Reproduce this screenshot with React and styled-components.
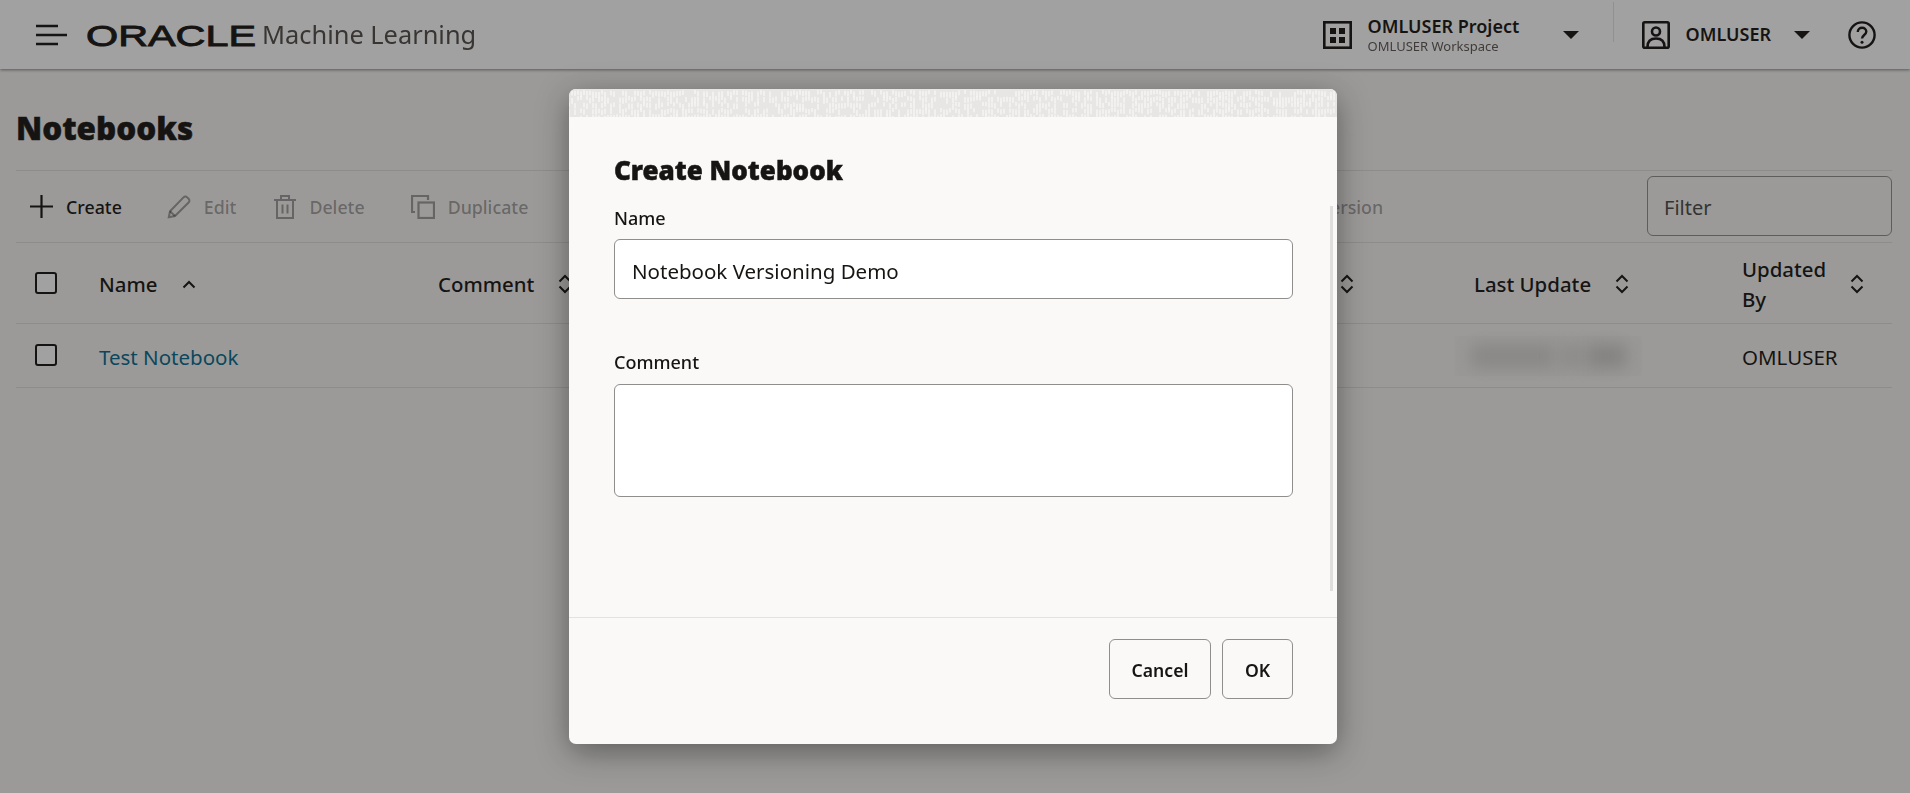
import React from "react";
import styled, { createGlobalStyle } from "styled-components";

const ink = "#161513";

const GlobalStyle = createGlobalStyle`
  html, body {
    margin: 0;
    padding: 0;
    height: 100%;
    overflow: hidden;
    background: #f5f4f2;
    color: ${ink};
    font-family: "Noto Sans", "Open Sans", sans-serif;
  }
  * { box-sizing: border-box; }
`;

const Page = styled.div`
  width: 1910px;
  height: 793px;
  overflow: hidden;
`;

const TopBar = styled.header`
  height: 69px;
  display: flex;
  align-items: center;
  padding: 0 34px 0 36px;
  background: #fff;
  box-shadow: 0 1px 3px rgba(0, 0, 0, 0.45);
`;

const BrandName = styled.span`
  margin-left: 6px;
  font-size: 25.4px;
  color: #312d2a;
  opacity: 0.85;
  line-height: 1;
`;

const LogoSvg = styled.svg`
  margin-left: 19px;
  display: block;
`;

const TopRight = styled.div`
  margin-left: auto;
  display: flex;
  align-items: center;
`;

const ProjectText = styled.div`
  margin-left: 16px;
  width: 195px;
  display: flex;
  flex-direction: column;
`;

const ProjectName = styled.span`
  margin-top: -2px;
  font-size: 18px;
  font-weight: 600;
  line-height: 24px;
`;

const ProjectSub = styled.span`
  font-size: 13px;
  line-height: 16px;
  color: #312d2a;
  opacity: 0.8;
`;

const Divider = styled.div`
  width: 1px;
  height: 40px;
  margin: -26px 28px 0 34px;
  background: rgba(22, 21, 19, 0.12);
`;

const UserName = styled.span`
  margin: -2px 23px 0 16px;
  font-size: 18px;
  font-weight: 600;
`;

const Caret = styled.span`
  width: 0;
  height: 0;
  border-left: 8px solid transparent;
  border-right: 8px solid transparent;
  border-top: 8px solid ${ink};
`;

const HelpWrap = styled.span`
  margin-left: 38px;
  display: flex;
`;

const Content = styled.main`
  padding: 0 18px 0 16px;
`;

const Title = styled.h1`
  margin: 0;
  height: 101px;
  padding-top: 16px;
  display: flex;
  align-items: center;
  font-size: 31.4px;
  font-weight: 900;
  -webkit-text-stroke: 0.5px ${ink};
`;

const Toolbar = styled.div`
  height: 73px;
  display: flex;
  align-items: center;
  padding-left: 14px;
  border-top: 1px solid #dedddb;
  border-bottom: 1px solid #dedddb;
`;

const ToolButton = styled.span`
  display: flex;
  align-items: center;
  gap: 13px;
  margin-left: ${(p) => p.$offset || 0}px;
  font-size: 17.8px;
  font-weight: 500;
  white-space: nowrap;
  color: ${(p) => (p.$disabled ? "rgba(22, 21, 19, 0.4)" : ink)};
`;

const FilterBox = styled.div`
  margin: -1px 0 0 auto;
  width: 245px;
  height: 60px;
  padding: 2px 0 0 16px;
  display: flex;
  align-items: center;
  font-size: 20px;
  color: #4a4846;
  border: 1px solid #8f8e8c;
  border-radius: 6px;
`;

const TableRow = styled.div`
  display: grid;
  grid-template-columns: 83px 339px 760px 276px 268px 1fr;
  align-items: center;
  height: ${(p) => p.$height}px;
  border-bottom: 1px solid #dedddb;
`;

const HeadCell = styled.div`
  display: flex;
  align-items: center;
  gap: 24px;
  justify-content: ${(p) => (p.$end ? "flex-end" : "flex-start")};
  padding-top: 2px;
  padding-right: ${(p) => (p.$end ? 120 : 0)}px;
  font-size: 20.4px;
  font-weight: 500;
  line-height: 30px;
`;

const BodyCell = styled.div`
  padding-top: 2px;
  font-size: 20.5px;
  color: ${(p) => p.$color || ink};
`;

const CheckCell = styled.div`
  padding-left: 19px;
  display: flex;
  margin-top: ${(p) => p.$shift}px;
`;

const CheckBox = styled.span`
  width: 22px;
  height: 22px;
  border: 2px solid ${ink};
  border-radius: 3px;
  background: #fff;
`;

const Redacted = styled.div`
  width: 187px;
  height: 40px;
  margin-left: -19px;
  background: #f1f0ee;
  display: flex;
  align-items: center;
  padding: 0 16px;
  gap: 2px;
`;

const RedactedBlob = styled.span`
  display: block;
  flex: ${(p) => p.$flex};
  height: 24px;
  background: ${(p) => p.$color};
  filter: blur(8px);
`;

const Scrim = styled.div`
  position: fixed;
  inset: 0;
  background: rgba(22, 21, 19, 0.4);
  padding: 89px 0 0 569px;
`;

const Dialog = styled.section`
  width: 768px;
  height: 655px;
  display: flex;
  flex-direction: column;
  overflow: hidden;
  background: #fbf9f8;
  border-radius: 7px;
  box-shadow: 0 8px 32px rgba(0, 0, 0, 0.4);
`;

const Band = styled.div`
  height: 28px;
  flex: none;
  background: #e8e6e4;
`;

const DialogBody = styled.div`
  flex: 1;
  position: relative;
  padding: 35px 44px 0 45px;
`;

const DialogTitle = styled.h2`
  margin: 0 0 18px;
  font-size: 26px;
  font-weight: 900;
  line-height: 36px;
  -webkit-text-stroke: 0.5px ${ink};
`;

const Label = styled.label`
  display: block;
  margin-bottom: ${(p) => p.$gap}px;
  font-size: 18px;
  font-weight: 500;
  line-height: 24px;
`;

const TextInput = styled.div`
  height: ${(p) => p.$height}px;
  margin-bottom: ${(p) => p.$gap || 0}px;
  padding: 3px 17px 0;
  display: flex;
  align-items: center;
  font-size: 20.5px;
  background: #fff;
  border: 1px solid #8f8e8c;
  border-radius: 6px;
`;

const ScrollThumb = styled.div`
  position: absolute;
  top: 89px;
  bottom: 26px;
  right: 4px;
  width: 3px;
  background: #dfdedc;
`;

const DialogFooter = styled.footer`
  height: 127px;
  flex: none;
  display: flex;
  justify-content: flex-end;
  align-items: flex-start;
  gap: 11px;
  padding: 21px 44px 0 0;
  border-top: 1px solid #e4e2e0;
`;

const FooterButton = styled.button`
  width: ${(p) => p.$width}px;
  height: 60px;
  padding: 2px 0 0;
  font-family: inherit;
  font-size: 17.6px;
  font-weight: 600;
  color: ${ink};
  background: transparent;
  border: 1px solid #8f8e8c;
  border-radius: 6px;
`;

const Stroke = ({ size, h, children, width = 2, color = "currentColor" }) => (
  <svg
    width={size}
    height={h || size}
    viewBox={`0 0 ${size} ${h || size}`}
    fill="none"
    stroke={color}
    strokeWidth={width}
  >
    {children}
  </svg>
);

const Hamburger = () => (
  <Stroke size={31} h={22} width={2.6} color={ink}>
    <path d="M0 2h22M0 11h31M0 20h22" />
  </Stroke>
);

const OracleLogo = () => (
  <LogoSvg width="170" height="40" viewBox="0 0 170 40">
    <text
      x="0"
      y="30.5"
      fontFamily="Liberation Sans"
      fontSize="29.5"
      textLength="170"
      lengthAdjust="spacingAndGlyphs"
      fill={ink}
      stroke={ink}
      strokeWidth="0.9"
    >
      ORACLE
    </text>
  </LogoSvg>
);

const GridIcon = () => (
  <Stroke size={29} h={28} width={2.6} color={ink}>
    <rect x="1.3" y="1.3" width="26.4" height="25.4" />
    <path
      d="M7 7h6v6H7zM16 7h6v6h-6zM7 16h6v6H7zM16 16h6v6h-6z"
      fill={ink}
      stroke="none"
    />
  </Stroke>
);

const PersonIcon = () => (
  <Stroke size={28} width={2.6} color={ink}>
    <rect x="1.3" y="1.3" width="25.4" height="25.4" rx="1.5" />
    <circle cx="14" cy="10.5" r="4" />
    <path d="M5.5 26c0-6 3.5-8.5 8.5-8.5s8.5 2.5 8.5 8.5" />
  </Stroke>
);

const HelpIcon = () => (
  <Stroke size={28} width={2.4} color={ink}>
    <circle cx="14" cy="14" r="12.6" />
    <path d="M9.8 11c0-2.8 2-4.2 4.3-4.2s4.2 1.5 4.2 3.8c0 3.4-4.3 3.4-4.3 7" />
    <circle cx="14" cy="21.2" r="1.5" fill={ink} stroke="none" />
  </Stroke>
);

const PlusIcon = () => (
  <Stroke size={23} width={2.2} color={ink}>
    <path d="M11.5 0v23M0 11.5h23" />
  </Stroke>
);

const PencilIcon = () => (
  <Stroke size={24} width={2}>
    <path d="M1.8 22.2l1.2-6L16.5 2.4c1.1-1.1 2.6-1.1 3.7 0l1.4 1.4c1.1 1.1 1.1 2.6 0 3.7L8 21z" />
    <path d="M3 16.2L8 21" />
  </Stroke>
);

const TrashIcon = () => (
  <Stroke size={22} h={24} width={2}>
    <path d="M0 5h22M3 5v18h16V5M7 5V1h8v4M8.5 9.5v9M13.5 9.5v9" />
  </Stroke>
);

const CopyIcon = () => (
  <Stroke size={24} width={2.2}>
    <path d="M4 17H1V1h16v4" />
    <rect x="7.5" y="7.5" width="15.5" height="15.5" />
  </Stroke>
);

const SortIcon = () => (
  <Stroke size={14} h={20} width={2} color={ink}>
    <path d="M1.5 7.5L7 2l5.5 5.5M1.5 12.5L7 18l5.5-5.5" />
  </Stroke>
);

const SortUpIcon = () => (
  <Stroke size={14} h={9} width={2} color={ink}>
    <path d="M1.5 7.5L7 2l5.5 5.5" />
  </Stroke>
);

// speckled strip along the top of the dialog
const speckles = [];
for (let x = 0; x < 768; x += 3) {
  for (let y = 0; y < 28; y += 6) {
    const n = Math.abs(Math.sin(x * 12.9898 + y * 78.233) * 43758.5453) % 1;
    if (n > 0.3) speckles.push({ x, y: y + n * 3, len: 3 + n * 3 });
  }
}

const BandDrawing = () => (
  <svg width="768" height="28" viewBox="0 0 768 28" stroke="#f9f8f6" strokeWidth="1.3">
    {speckles.map((s, i) => (
      <line key={i} x1={s.x} x2={s.x} y1={s.y} y2={s.y + s.len} />
    ))}
  </svg>
);

function App() {
  return (
    <Page>
      <GlobalStyle />
      <TopBar>
        <Hamburger />
        <OracleLogo />
        <BrandName>Machine Learning</BrandName>
        <TopRight>
          <GridIcon />
          <ProjectText>
            <ProjectName>OMLUSER Project</ProjectName>
            <ProjectSub>OMLUSER Workspace</ProjectSub>
          </ProjectText>
          <Caret />
          <Divider />
          <PersonIcon />
          <UserName>OMLUSER</UserName>
          <Caret />
          <HelpWrap>
            <HelpIcon />
          </HelpWrap>
        </TopRight>
      </TopBar>
      <Content>
        <Title>Notebooks</Title>
        <Toolbar>
          <ToolButton>
            <PlusIcon />
            Create
          </ToolButton>
          <ToolButton $disabled $offset={45}>
            <PencilIcon />
            Edit
          </ToolButton>
          <ToolButton $disabled $offset={38}>
            <TrashIcon />
            Delete
          </ToolButton>
          <ToolButton $disabled $offset={46}>
            <CopyIcon />
            Duplicate
          </ToolButton>
          <ToolButton $disabled $offset={791}>
            Version
          </ToolButton>
          <FilterBox>Filter</FilterBox>
        </Toolbar>
        <TableRow $height={81}>
          <CheckCell $shift={0}>
            <CheckBox />
          </CheckCell>
          <HeadCell>
            Name
            <SortUpIcon />
          </HeadCell>
          <HeadCell>
            Comment
            <SortIcon />
          </HeadCell>
          <HeadCell $end>
            <SortIcon />
          </HeadCell>
          <HeadCell>
            Last Update
            <SortIcon />
          </HeadCell>
          <HeadCell>
            <span>
              Updated
              <br />
              By
            </span>
            <SortIcon />
          </HeadCell>
        </TableRow>
        <TableRow $height={64}>
          <CheckCell $shift={-2}>
            <CheckBox />
          </CheckCell>
          <BodyCell $color="#006b8f">Test Notebook</BodyCell>
          <BodyCell />
          <BodyCell />
          <Redacted>
            <RedactedBlob $flex={3} $color="#d6d5d3" />
            <RedactedBlob $flex={1} $color="#dddcda" />
            <RedactedBlob $flex={1.4} $color="#cdccca" />
          </Redacted>
          <BodyCell>OMLUSER</BodyCell>
        </TableRow>
      </Content>
      <Scrim>
        <Dialog>
          <Band>
            <BandDrawing />
          </Band>
          <DialogBody>
            <DialogTitle>Create Notebook</DialogTitle>
            <Label $gap={9}>Name</Label>
            <TextInput $height={60} $gap={51}>
              Notebook Versioning Demo
            </TextInput>
            <Label $gap={10}>Comment</Label>
            <TextInput $height={113} />
            <ScrollThumb />
          </DialogBody>
          <DialogFooter>
            <FooterButton $width={102}>Cancel</FooterButton>
            <FooterButton $width={71}>OK</FooterButton>
          </DialogFooter>
        </Dialog>
      </Scrim>
    </Page>
  );
}

export default App;
